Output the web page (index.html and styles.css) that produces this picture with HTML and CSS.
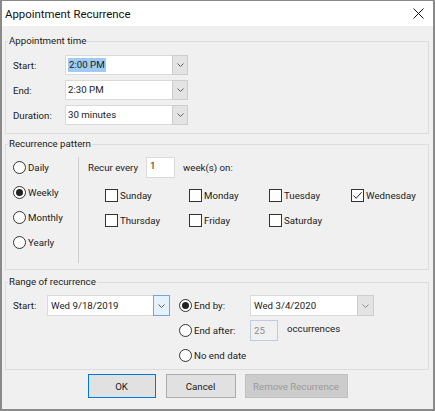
FILE: index.html
```html
<!DOCTYPE html>
<html lang="en">
<head>
    <meta charset="UTF-8">
    <title>Appointment Recurrence</title>
    <link rel="stylesheet" href="styles.css">
</head>
<body>
    <div class="dialog">
        <div class="titlebar">
            <span class="title">Appointment Recurrence</span>
            <span class="close-x">
                <svg width="11" height="11" viewBox="0 0 11 11"><path d="M0.5 0.5 L10.5 10.5 M10.5 0.5 L0.5 10.5" stroke="#111" stroke-width="1" fill="none"/></svg>
            </span>
        </div>

        <div class="dialog-body">
            <!-- Appointment time -->
            <fieldset class="group">
                <legend>Appointment time</legend>
                <div class="time-rows">
                    <div class="field-row">
                        <span class="field-label">Start:</span>
                        <div class="combo">
                            <span class="combo-text"><span class="selected">2:00 PM</span></span>
                            <span class="combo-btn"><svg width="7" height="4" viewBox="0 0 7 4"><path d="M0.5 0.5 L3.5 3.5 L6.5 0.5" fill="none" stroke="#606060"/></svg></span>
                        </div>
                    </div>
                    <div class="field-row">
                        <span class="field-label">End:</span>
                        <div class="combo">
                            <span class="combo-text">2:30 PM</span>
                            <span class="combo-btn"><svg width="7" height="4" viewBox="0 0 7 4"><path d="M0.5 0.5 L3.5 3.5 L6.5 0.5" fill="none" stroke="#606060"/></svg></span>
                        </div>
                    </div>
                    <div class="field-row">
                        <span class="field-label">Duration:</span>
                        <div class="combo">
                            <span class="combo-text">30 minutes</span>
                            <span class="combo-btn"><svg width="7" height="4" viewBox="0 0 7 4"><path d="M0.5 0.5 L3.5 3.5 L6.5 0.5" fill="none" stroke="#606060"/></svg></span>
                        </div>
                    </div>
                </div>
            </fieldset>

            <!-- Recurrence pattern -->
            <fieldset class="group group-pattern">
                <legend>Recurrence pattern</legend>
                <div class="pattern">
                    <div class="freq">
                        <div class="radio-row"><span class="radio"></span>Daily</div>
                        <div class="radio-row"><span class="radio checked"></span>Weekly</div>
                        <div class="radio-row"><span class="radio"></span>Monthly</div>
                        <div class="radio-row"><span class="radio"></span>Yearly</div>
                    </div>
                    <div class="vsep"></div>
                    <div class="weekly">
                        <div class="recur-row">
                            <span>Recur every</span>
                            <span class="textbox small-box">1</span>
                            <span>week(s) on:</span>
                        </div>
                        <div class="days">
                            <div class="check-row"><span class="checkbox"></span>Sunday</div>
                            <div class="check-row"><span class="checkbox"></span>Monday</div>
                            <div class="check-row"><span class="checkbox"></span>Tuesday</div>
                            <div class="check-row"><span class="checkbox"><svg width="11" height="11" viewBox="0 0 11 11"><path d="M1.5 5.5 L4.2 8.3 L9.6 2.2" fill="none" stroke="#222" stroke-width="1"/></svg></span>Wednesday</div>
                            <div class="check-row"><span class="checkbox"></span>Thursday</div>
                            <div class="check-row"><span class="checkbox"></span>Friday</div>
                            <div class="check-row"><span class="checkbox"></span>Saturday</div>
                        </div>
                    </div>
                </div>
            </fieldset>

            <!-- Range of recurrence -->
            <fieldset class="group group-range">
                <legend>Range of recurrence</legend>
                <div class="range">
                    <span class="field-label">Start:</span>
                    <div class="combo date-combo">
                        <span class="combo-text">Wed 9/18/2019</span>
                        <span class="combo-btn focused"><svg width="7" height="4" viewBox="0 0 7 4"><path d="M0.5 0.5 L3.5 3.5 L6.5 0.5" fill="none" stroke="#505a66"/></svg></span>
                    </div>
                    <div class="radio-row"><span class="radio checked"></span>End by:</div>
                    <div class="combo end-combo">
                        <span class="combo-text">Wed 3/4/2020</span>
                        <span class="combo-btn"><svg width="7" height="4" viewBox="0 0 7 4"><path d="M0.5 0.5 L3.5 3.5 L6.5 0.5" fill="none" stroke="#8a8a8a"/></svg></span>
                    </div>

                    <div class="radio-row col-3"><span class="radio"></span>End after:</div>
                    <div class="after-row">
                        <span class="textbox disabled-box">25</span>
                        <span class="occ">occurrences</span>
                    </div>

                    <div class="radio-row col-3 wide"><span class="radio"></span>No end date</div>
                </div>
            </fieldset>

            <div class="buttons">
                <button class="btn btn-default btn-ok">OK</button>
                <button class="btn btn-cancel">Cancel</button>
                <button class="btn btn-disabled">Remove Recurrence</button>
            </div>
        </div>
    </div>
</body>
</html>
```

FILE: styles.css
```css
* {
    box-sizing: border-box;
}

body {
    margin: 0;
    background: #f0f0f0;
}

.dialog {
    width: 435px;
    height: 411px;
    border: 2px solid #8a8a8a;
    border-top-width: 1px;
    display: flex;
    flex-direction: column;
    font-family: Roboto, 'Liberation Sans', sans-serif;
    font-size: 9.7px;
    color: #1a1a1a;
}

.titlebar {
    height: 25px;
    background: #fff;
    display: flex;
    align-items: center;
    justify-content: space-between;
    padding: 0 9px 0 3px;
}

.title {
    font-size: 11.4px;
    color: #111;
}

.close-x {
    display: flex;
}

.dialog-body {
    flex: 1;
    background: #f0f0f0;
    padding: 8px 4px 0 3px;
}

/* group boxes */
.group {
    margin: 0;
    padding: 0;
    min-width: 0;
    border: 1px solid #dcdcdc;
}

.group legend {
    margin-left: 2px;
    padding: 0 1px;
    line-height: 14px;
}

.time-rows {
    padding: 7px 0 8px 7px;
    display: flex;
    flex-direction: column;
    gap: 5px;
}

.field-row {
    display: flex;
    align-items: center;
    height: 20px;
}

.field-label {
    width: 52px;
}

.combo {
    display: flex;
    height: 20px;
}

.combo-text {
    width: 107px;
    background: #fff;
    border: 1px solid #dadada;
    border-right: none;
    padding: 0 2px;
    display: flex;
    align-items: center;
    line-height: 14px;
}

.selected {
    background: #9fcbf2;
    padding: 0 1px;
}

.combo-btn {
    width: 16px;
    background: #e3e3e3;
    border: 1px solid #cdcdcd;
    display: flex;
    align-items: center;
    justify-content: center;
}

.combo-btn.focused {
    background: #e5f1fb;
    border-color: #6ea6dd;
}

/* recurrence pattern */
.group-pattern {
    margin-top: 3px;
}

.pattern {
    display: flex;
    height: 118px;
    padding: 4px 0 0 7px;
}

.freq {
    width: 65px;
}

.radio-row {
    display: flex;
    align-items: center;
    height: 25px;
    gap: 2px;
    white-space: nowrap;
}

.radio {
    width: 13px;
    height: 13px;
    border: 1px solid #333;
    border-radius: 50%;
    background: #fff;
    display: flex;
    align-items: center;
    justify-content: center;
    flex-shrink: 0;
}

.radio.checked::after {
    content: "";
    width: 7px;
    height: 7px;
    border-radius: 50%;
    background: #222;
}

.vsep {
    width: 1px;
    background: #cfcfcf;
    margin: 2px 0 6px;
}

.weekly {
    padding: 2px 0 0 9px;
}

.recur-row {
    display: flex;
    align-items: center;
    gap: 8px;
    height: 21px;
}

.textbox {
    background: #fff;
    border: 1px solid #dadada;
    height: 21px;
    padding: 2px 3px 0;
}

.small-box {
    width: 29px;
}

.days {
    display: grid;
    grid-template-columns: 84px 80px 82px auto;
    grid-auto-rows: 25px;
    margin: 5px 0 0 17px;
}

.check-row {
    display: flex;
    align-items: center;
    gap: 2px;
}

.checkbox {
    width: 13px;
    height: 13px;
    border: 1px solid #333;
    background: #fff;
    display: flex;
}

/* range of recurrence */
.group-range {
    margin-top: 5px;
}

.range {
    display: grid;
    grid-template-columns: 34px 123px 80px auto;
    row-gap: 4px;
    grid-auto-rows: 21px;
    align-items: center;
    padding: 6px 0 3px 7px;
}

.range .radio-row {
    height: 21px;
    margin-left: 9px;
}

.range .col-3 {
    grid-column: 3;
}

.range .wide {
    grid-column: 3 / span 2;
}

.date-combo,
.end-combo {
    height: 21px;
}

.date-combo .combo-text {
    width: 106px;
}

.date-combo .combo-btn,
.end-combo .combo-btn {
    width: 17px;
}

.end-combo .combo-text {
    width: 107px;
}

.range .combo-text {
    align-items: flex-start;
    padding-top: 3px;
    padding-left: 3px;
}

.after-row {
    display: flex;
    align-items: center;
    gap: 9px;
}

.disabled-box {
    width: 28px;
    background: #f0f0f0;
    border-color: #bccde0;
    color: #8c8c8c;
    padding-top: 4px;
}

.occ {
    margin-top: -4px;
}

/* buttons */
.buttons {
    display: flex;
    justify-content: center;
    margin-top: 4px;
    gap: 10px;
    padding-left: 1px;
}

.btn {
    height: 24px;
    font: inherit;
    color: #1a1a1a;
    background: #e1e1e1;
    border: 1px solid #adadad;
    padding: 0;
}

.btn-default {
    border-color: #0078d7;
}

.btn-ok {
    width: 68px;
}

.btn-cancel {
    width: 70px;
    margin-right: -1px;
}

.btn-disabled {
    width: 103px;
    background: #cccccc;
    border-color: #bfbfbf;
    color: #9a9a9a;
}
```
